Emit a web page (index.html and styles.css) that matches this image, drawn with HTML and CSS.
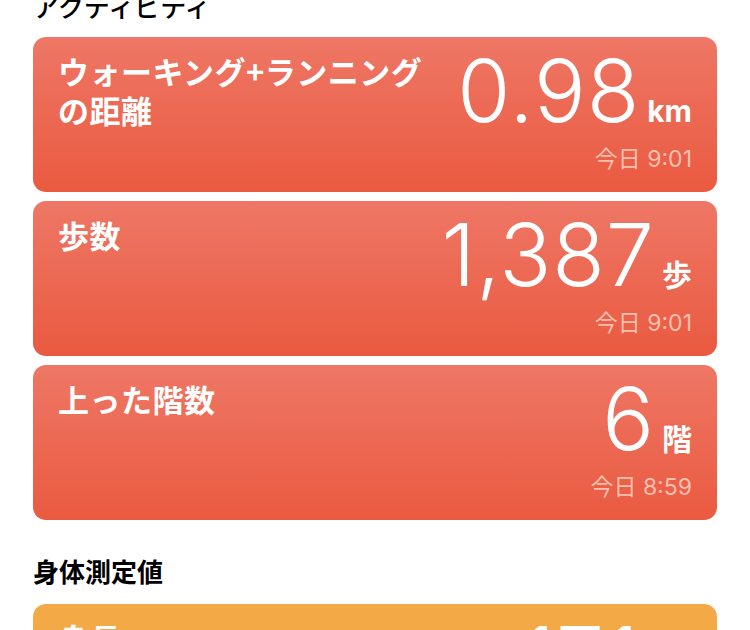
FILE: index.html
```html
<!DOCTYPE html>
<html lang="ja">
<head>
  <meta charset="UTF-8" />
  <title>ヘルスケア</title>
  <link rel="stylesheet" href="styles.css">
</head>
<body>
  <h2 class="section-title first">アクティビティ</h2>

  <div class="cards">
    <div class="card red">
      <div class="card-title">ウォーキング+ランニング<br>の距離</div>
      <div class="card-value">
        <div class="value-row"><span class="num">0.98</span><span class="unit">km</span></div>
        <div class="time">今日 9:01</div>
      </div>
    </div>

    <div class="card red">
      <div class="card-title">歩数</div>
      <div class="card-value">
        <div class="value-row"><span class="num">1,387</span><span class="unit">歩</span></div>
        <div class="time">今日 9:01</div>
      </div>
    </div>

    <div class="card red">
      <div class="card-title">上った階数</div>
      <div class="card-value">
        <div class="value-row"><span class="num">6</span><span class="unit">階</span></div>
        <div class="time">今日 8:59</div>
      </div>
    </div>
  </div>

  <h2 class="section-title">身体測定値</h2>

  <div class="cards">
    <div class="card orange">
      <div class="card-title">身長</div>
      <div class="card-value">
        <div class="value-row"><span class="num">171</span><span class="unit">cm</span></div>
        <div class="time">今日 8:30</div>
      </div>
    </div>
  </div>
</body>
</html>
```
FILE: styles.css
```css
body {
  margin: 0;
  padding: 0 33px;
  background: #fff;
  font-family: 'Inter', 'Noto Sans CJK JP', sans-serif;
  color: #000;
  overflow: hidden;
  height: 630px;
}

.section-title {
  font-family: 'Noto Sans CJK JP', sans-serif;
  font-size: 26px;
  font-weight: 700;
  line-height: 32px;
  margin: 35px 0 17px;
}

.section-title.first {
  font-weight: 500;
  margin-top: -10px;
  margin-bottom: 15px;
}

.cards {
  display: flex;
  flex-direction: column;
  gap: 9px;
}

.card {
  height: 155px;
  box-sizing: border-box;
  border-radius: 13px;
  padding: 14px 25px 20px 25px;
  display: flex;
  justify-content: space-between;
  color: #fff;
}

.red {
  background: linear-gradient(to bottom, #ee7765, #ea5a40);
}

.orange {
  background: #f3a945;
}

.card-title {
  font-family: 'Noto Sans CJK JP', sans-serif;
  font-size: 31px;
  font-weight: 700;
  line-height: 39px;
  letter-spacing: 0.5px;
}

.card-value {
  display: flex;
  flex-direction: column;
  align-items: flex-end;
  justify-content: space-between;
}

.value-row {
  display: flex;
  align-items: baseline;
  gap: 7px;
  margin-top: -6px;
}

.num {
  font-family: 'Inter', sans-serif;
  font-weight: 300;
  font-size: 86px;
  line-height: 92px;
  letter-spacing: 1px;
}

.unit {
  font-family: 'Inter', 'Noto Sans CJK JP', sans-serif;
  font-weight: 700;
  font-size: 30px;
}

.time {
  font-family: 'Inter', 'Noto Sans CJK JP', sans-serif;
  font-size: 23px;
  color: #fbbfae;
  line-height: 26px;
}
```
